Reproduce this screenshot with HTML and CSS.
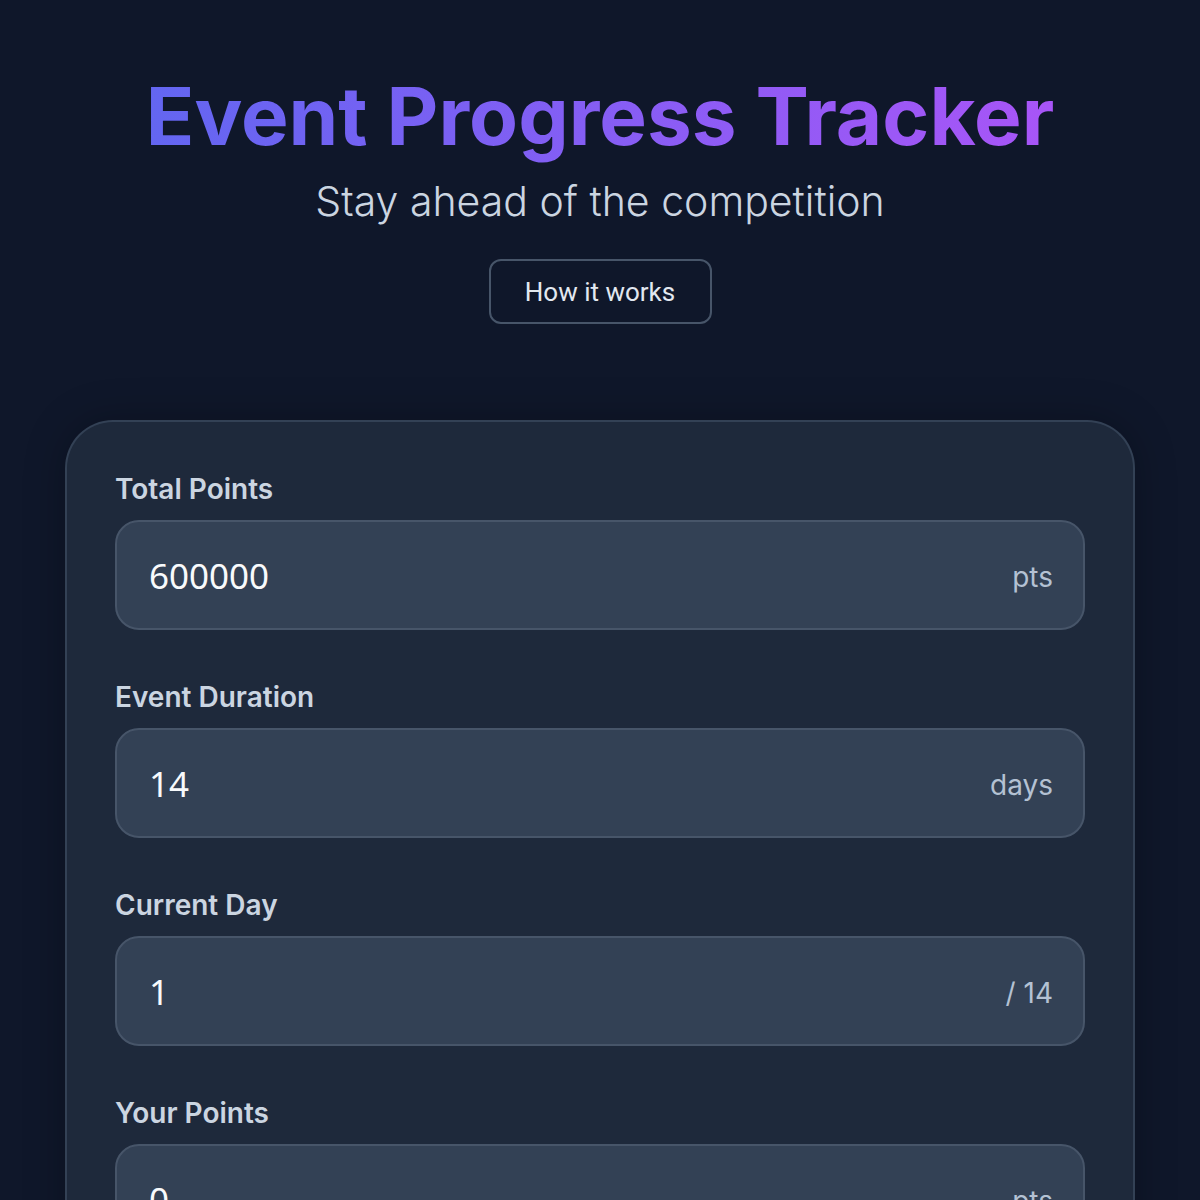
FILE: index.html
```html
<!DOCTYPE html>
<html lang="en">
<head>
    <meta charset="UTF-8">
    <meta name="viewport" content="width=device-width, initial-scale=1.0">
    <title>Event Progress Tracker</title>
    <link rel="stylesheet" href="styles.css">
</head>
<body>
    <header class="hero">
        <h1>Event Progress Tracker</h1>
        <p class="subtitle">Stay ahead of the competition</p>
        <button type="button" class="help-btn">How it works</button>
    </header>

    <main class="card">
        <div class="field">
            <label for="totalPoints">Total Points</label>
            <div class="input-wrap">
                <input type="text" id="totalPoints" value="600000">
                <span class="suffix">pts</span>
            </div>
        </div>

        <div class="field">
            <label for="duration">Event Duration</label>
            <div class="input-wrap">
                <input type="text" id="duration" value="14">
                <span class="suffix">days</span>
            </div>
        </div>

        <div class="field">
            <label for="currentDay">Current Day</label>
            <div class="input-wrap">
                <input type="text" id="currentDay" value="1">
                <span class="suffix">/ 14</span>
            </div>
        </div>

        <div class="field">
            <label for="yourPoints">Your Points</label>
            <div class="input-wrap">
                <input type="text" id="yourPoints" value="0">
                <span class="suffix">pts</span>
            </div>
        </div>
    </main>
</body>
</html>
```

FILE: styles.css
```css
body {
    font-family: Inter, 'Noto Sans', sans-serif;
    background: #0f172a;
    color: #e2e8f0;
    margin: 0;
    padding: 0;
}
.hero {
    text-align: center;
    padding-top: 68px;
}
h1 {
    margin: 0;
    font-size: 80px;
    font-weight: 700;
    line-height: 1.2;
    background: linear-gradient(90deg, #6366f1, #a855f7);
    -webkit-background-clip: text;
    background-clip: text;
    color: transparent;
    display: inline-block;
}
.subtitle {
    margin: 12px 0 0;
    font-size: 41px;
    font-weight: 300;
    color: #cbd5e1;
}
.help-btn {
    margin-top: 33px;
    width: 223px;
    height: 65px;
    font-family: Roboto, sans-serif;
    font-size: 26px;
    color: #e2e8f0;
    background: transparent;
    border: 2px solid #475569;
    border-radius: 12px;
}
.card {
    margin: 96px 65px 0;
    background: #1e293b;
    border: 2px solid #334155;
    border-bottom: none;
    border-radius: 48px 48px 0 0;
    padding: 48px 48px 0;
    box-shadow: 0 0 40px rgba(0, 0, 0, 0.25);
    min-height: 800px;
}
.field { margin-bottom: 48px; }
label {
    display: block;
    font-size: 28px;
    font-weight: 600;
    color: #cbd5e1;
    margin-bottom: 12px;
    line-height: 38px;
}
.input-wrap {
    display: flex;
    align-items: center;
    height: 110px;
    box-sizing: border-box;
    background: #334155;
    border: 2px solid #475569;
    border-radius: 24px;
    padding: 0 30px 0 32px;
}
.input-wrap input {
    flex: 1;
    min-width: 0;
    background: transparent;
    border: none;
    outline: none;
    padding: 0;
    font-family: 'Noto Sans', sans-serif;
    font-size: 35px;
    color: #f8fafc;
}
.suffix {
    font-size: 28px;
    color: #b4c1d3;
    margin-top: 4px;
}
```
